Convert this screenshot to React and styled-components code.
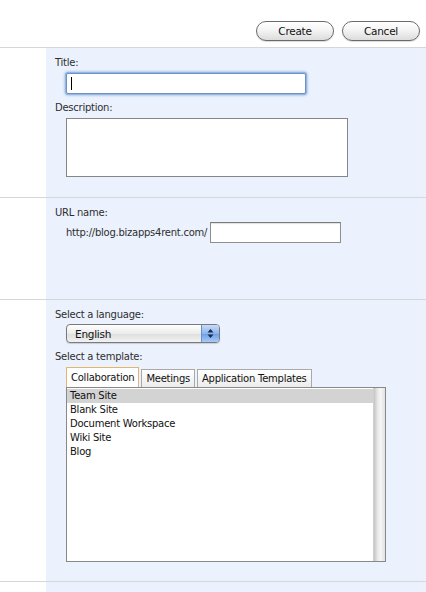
import styled, { createGlobalStyle } from "styled-components"

const Global = createGlobalStyle`
    html, body {
        margin: 0;
        padding: 0;
        background: #ffffff;
    }
    body {
        font-family: "DejaVu Sans", Verdana, sans-serif;
        font-size: 10px;
        letter-spacing: -0.25px;
        color: #333333;
    }
`;

const Page = styled.div`
    width: 426px;
    display: flex;
    flex-direction: column;
`;

const Toolbar = styled.div`
    height: 47px;
    display: flex;
    align-items: flex-start;
    justify-content: flex-end;
    gap: 8px;
    padding: 21px 6px 0 0;
    box-sizing: border-box;
`;

const PillButton = styled.button`
    width: 78px;
    height: 20px;
    border-radius: 10px;
    border: 1px solid #6a6a6a;
    background: linear-gradient(#ffffff 0%, #f4f4f4 45%, #dcdcdc 100%);
    box-shadow: inset 0 1px 0 #ffffff, 0 1px 1px rgba(0, 0, 0, 0.15);
    font-family: "DejaVu Sans", Verdana, sans-serif;
    font-size: 10.5px;
    letter-spacing: -0.25px;
    color: #111111;
    padding: 0;
    cursor: pointer;
`;

const Section = styled.div`
    display: flex;
    height: ${p => p.$h}px;
    border-top: 1px solid #d6d6d6;
`;

const Gutter = styled.div`
    width: 46px;
    flex-shrink: 0;
    background: #ffffff;
`;

const Body = styled.div`
    flex: 1;
    background: #ebf2fd;
    padding: 9px 0 0 9px;
    display: flex;
    flex-direction: column;
    align-items: flex-start;
`;

const Label = styled.div`
    font-size: 10px;
    line-height: 12px;
    color: #2e2e2e;
    margin-top: ${p => p.$mt || 0}px;
`;

const Indent = styled.div`
    margin-left: ${p => p.$ml || 11}px;
    margin-top: ${p => p.$mt || 0}px;
    display: flex;
    align-items: center;
`;

const TitleInput = styled.div`
    width: 234px;
    height: 19px;
    border: 1px solid #6e93c6;
    border-radius: 2px;
    background: #ffffff;
    box-shadow: 0 0 0 1px #94b5e0, 0 0 3px 1px #7ea4d8;
    display: flex;
    align-items: center;
    padding-left: 4px;
`;

const Caret = styled.div`
    width: 1px;
    height: 13px;
    background: #000000;
`;

const TextArea = styled.div`
    width: 280px;
    height: 57px;
    border: 1px solid #868686;
    background: #ffffff;
`;

const UrlPrefix = styled.span`
    font-size: 10px;
    color: #2e2e2e;
    margin-right: 3px;
`;

const TextInput = styled.div`
    width: 129px;
    height: 19px;
    border: 1px solid #8f8f8f;
    border-top-color: #7a7a7a;
    background: #ffffff;
    box-shadow: inset 0 1px 1px rgba(0, 0, 0, 0.12);
`;

const Select = styled.div`
    width: 152px;
    height: 17px;
    border: 1px solid #7a7a7a;
    border-radius: 4px;
    background: linear-gradient(#ffffff, #ececec 50%, #dedede 51%, #f2f2f2);
    display: flex;
    align-items: center;
    overflow: hidden;
    box-shadow: 0 1px 1px rgba(0, 0, 0, 0.15);
`;

const SelectText = styled.span`
    flex: 1;
    padding-left: 8px;
    font-size: 10.5px;
    color: #111111;
`;

const Stepper = styled.div`
    width: 17px;
    height: 100%;
    border-left: 1px solid #6d8fc4;
    background: linear-gradient(#c9dcf8, #8db4ee 50%, #6a9de8 51%, #a8cbf8);
    display: flex;
    align-items: center;
    justify-content: center;
`;

const Tabs = styled.div`
    display: flex;
    margin-left: 11px;
    margin-top: 4px;
    align-items: flex-end;
`;

const Tab = styled.div`
    height: ${p => (p.$active ? 20 : 18)}px;
    box-sizing: border-box;
    padding: 0 4px;
    margin-right: 2px;
    display: flex;
    align-items: center;
    font-size: 10px;
    color: #111111;
    border: 1px solid ${p => (p.$active ? "#e3b56a" : "#a9a9a9")};
    border-bottom: none;
    background: ${p => (p.$active ? "#ffffff" : "linear-gradient(#ffffff, #ececec)")};
`;

const ListBox = styled.div`
    margin-left: 11px;
    width: 318px;
    height: 173px;
    border: 1px solid #888888;
    background: #ffffff;
    display: flex;
`;

const Items = styled.div`
    flex: 1;
    padding-top: 1px;
`;

const Item = styled.div`
    height: 14px;
    line-height: 14px;
    padding-left: 3px;
    font-size: 10px;
    color: #111111;
    background: ${p => (p.$selected ? "#d3d3d3" : "transparent")};
`;

const Scrollbar = styled.div`
    width: 11px;
    background: linear-gradient(90deg, #c4c4c4, #e6e6e6 30%, #f6f6f6 60%, #e2e2e2);
    border-left: 1px solid #d0d0d0;
`;

const Tail = styled.div`
    display: flex;
    height: 12px;
    border-top: 1px solid #d6d6d6;
`;

export default function App() {
    const templates = ["Team Site", "Blank Site", "Document Workspace", "Wiki Site", "Blog"];

    return (
        <Page>
            <Global />
            <Toolbar>
                <PillButton>Create</PillButton>
                <PillButton>Cancel</PillButton>
            </Toolbar>

            <Section $h={149}>
                <Gutter />
                <Body>
                    <Label>Title:</Label>
                    <Indent $ml={11} $mt={4}>
                        <TitleInput>
                            <Caret />
                        </TitleInput>
                    </Indent>
                    <Label $mt={8}>Description:</Label>
                    <Indent $ml={11} $mt={4}>
                        <TextArea />
                    </Indent>
                </Body>
            </Section>

            <Section $h={101}>
                <Gutter />
                <Body>
                    <Label>URL name:</Label>
                    <Indent $ml={11} $mt={3}>
                        <UrlPrefix>http://blog.bizapps4rent.com/</UrlPrefix>
                        <TextInput />
                    </Indent>
                </Body>
            </Section>

            <Section $h={281}>
                <Gutter />
                <Body>
                    <Label>Select a language:</Label>
                    <Indent $ml={11} $mt={3}>
                        <Select>
                            <SelectText>English</SelectText>
                            <Stepper>
                                <svg width="7" height="11" viewBox="0 0 7 11">
                                    <path d="M3.5 1 L6.5 4.5 L0.5 4.5 Z" fill="#1a2a48" />
                                    <path d="M3.5 10 L6.5 6.5 L0.5 6.5 Z" fill="#1a2a48" />
                                </svg>
                            </Stepper>
                        </Select>
                    </Indent>
                    <Label $mt={8}>Select a template:</Label>
                    <Tabs>
                        <Tab $active>Collaboration</Tab>
                        <Tab>Meetings</Tab>
                        <Tab>Application Templates</Tab>
                    </Tabs>
                    <ListBox>
                        <Items>
                            {templates.map((t, i) => (
                                <Item key={t} $selected={i === 0}>{t}</Item>
                            ))}
                        </Items>
                        <Scrollbar />
                    </ListBox>
                </Body>
            </Section>

            <Tail>
                <Gutter />
                <Body />
            </Tail>
        </Page>
    )
}
